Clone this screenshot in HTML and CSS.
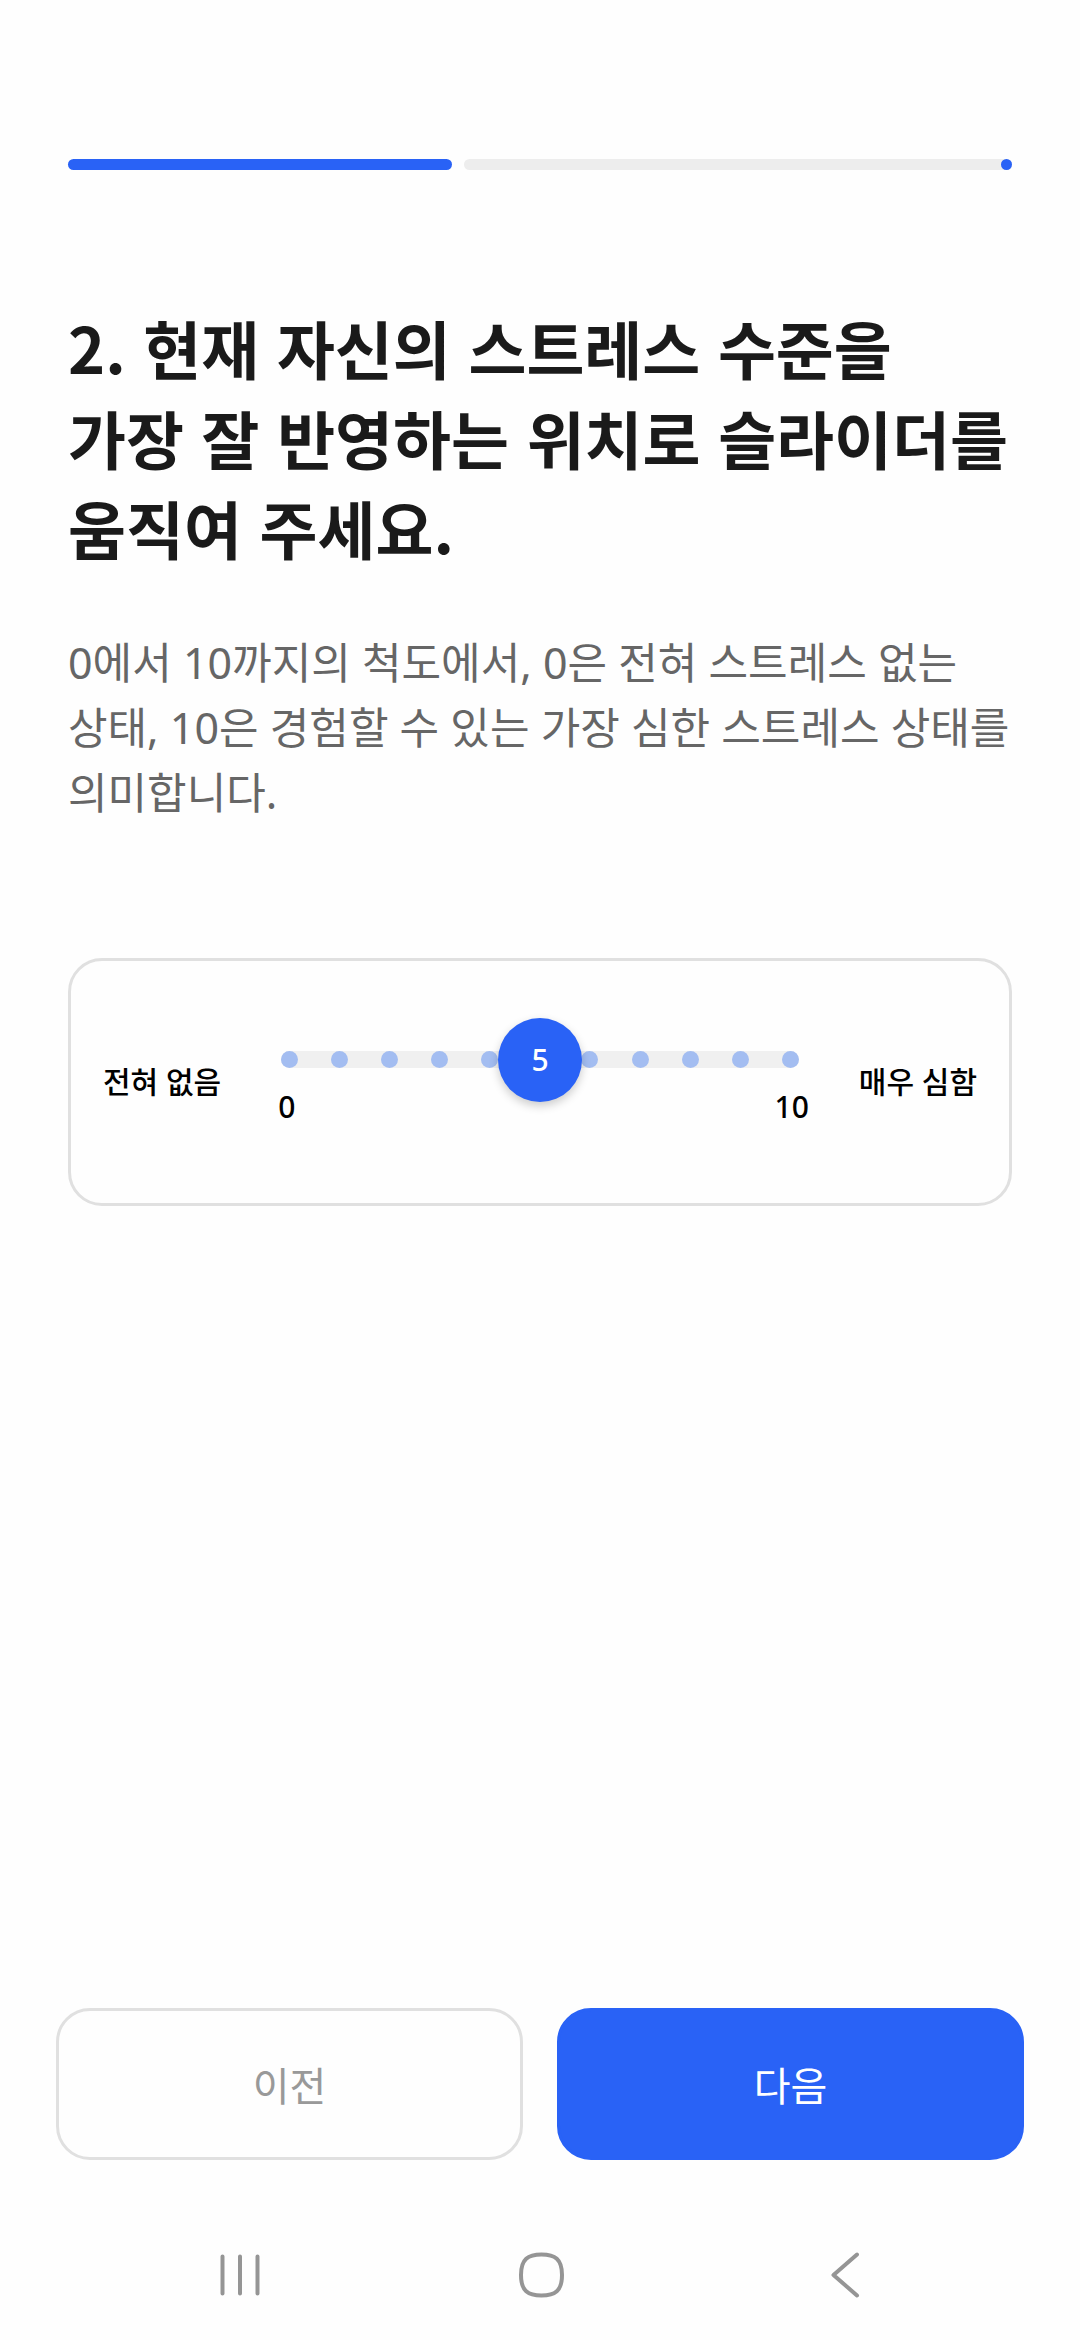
FILE: index.html
```html
<!DOCTYPE html>
<html lang="ko">
<head>
  <meta charset="UTF-8">
  <meta name="viewport" content="width=device-width, initial-scale=1.0">
  <title>스트레스 수준</title>
  <link rel="stylesheet" href="styles.css">
</head>
<body>
  <main class="survey">
    <!-- Progress -->
    <div class="progress" role="progressbar" aria-valuemin="0" aria-valuemax="100" aria-valuenow="41">
      <div class="progress-done"></div>
      <div class="progress-rest"></div>
    </div>

    <h1 id="question">2. 현재 자신의 스트레스 수준을<br>가장 잘 반영하는 위치로 슬라이더를<br>움직여 주세요.</h1>
    <p class="description">0에서 10까지의 척도에서, 0은 전혀 스트레스 없는<br>상태, 10은 경험할 수 있는 가장 심한 스트레스 상태를<br>의미합니다.</p>

    <!-- Stress slider -->
    <div class="card">
      <span class="card-label">전혀 없음</span>
      <div class="scale">
        <div class="slider">
          <div class="ticks">
            <i></i><i></i><i></i><i></i><i></i><i></i><i></i><i></i><i></i><i></i><i></i>
          </div>
          <input type="range" id="stress" min="0" max="10" value="5" aria-labelledby="question">
          <div class="value-rail"><output id="stressValue" for="stress">5</output></div>
        </div>
        <div class="scale-ends">
          <span>0</span>
          <span>10</span>
        </div>
      </div>
      <span class="card-label">매우 심함</span>
    </div>
  </main>

  <div class="actions">
    <button class="btn btn-prev" type="button">이전</button>
    <button class="btn btn-next" type="button">다음</button>
  </div>

  <!-- System navigation -->
  <nav class="system-nav">
    <button type="button" aria-label="최근 앱">
      <svg width="48" height="48" viewBox="0 0 48 48"><path d="M6.500 5.500v37M24 5.500v37M41.500 5.500v37"/></svg>
    </button>
    <button type="button" aria-label="홈">
      <svg width="48" height="48" viewBox="0 0 48 48"><path d="M25.500 3.500C39 3.500 46 8 46 24S39 44.500 25.500 44.500S5 40 5 24S12 3.500 25.500 3.500Z"/></svg>
    </button>
    <button type="button" aria-label="뒤로">
      <svg width="48" height="48" viewBox="0 0 48 48"><path d="M41 3.500L17.500 24L41 44.500"/></svg>
    </button>
  </nav>

  <script>
    const stress = document.getElementById("stress");
    const stressValue = document.getElementById("stressValue");

    stress.addEventListener("input", () => {
      stressValue.textContent = stress.value;
      stressValue.style.left = `${stress.value * 10}%`;
    });
  </script>
</body>
</html>
```
FILE: styles.css
```css
* {
  box-sizing: border-box;
}

body {
  font-family: "Noto Sans", "Noto Sans CJK KR", sans-serif;
  background: #fefefe;
  color: #000;
  margin: 0;
  display: flex;
  flex-direction: column;
  min-height: 100vh;
}

.survey {
  flex: 1;
  padding: 159px 68px 0;
}

.progress {
  display: flex;
  gap: 12px;
  height: 11px;
}

.progress-done,
.progress-rest {
  border-radius: 6px;
}

.progress-done {
  flex: 7;
  background: #2962f6;
}

.progress-rest {
  flex: 10;
  display: flex;
  justify-content: flex-end;
  background: #ededed;
}

.progress-rest::after {
  content: "";
  width: 11px;
  border-radius: 50%;
  background: #2962f6;
}

h1 {
  margin: 132px 0 0;
  font-family: "Noto Sans CJK KR", sans-serif;
  font-size: 63px;
  font-weight: 700;
  line-height: 90px;
  color: #1a1a1a;
  white-space: nowrap;
}

.description {
  margin: 58px 0 0;
  font-size: 43px;
  line-height: 65px;
  color: #666;
  white-space: nowrap;
}

.card {
  display: flex;
  align-items: center;
  margin-top: 133px;
  height: 248px;
  padding: 0 32px;
  border: 3px solid #e0e0e0;
  border-radius: 34px;
}

.card-label {
  font-size: 30px;
  font-weight: 500;
  line-height: 40px;
  white-space: nowrap;
}

.scale {
  flex: 1;
  margin: 0 50px;
}

.slider {
  position: relative;
  height: 84px;
}

.ticks {
  position: absolute;
  top: 33px;
  left: 10px;
  right: 10px;
  display: flex;
  justify-content: space-between;
  height: 17px;
  border-radius: 9px;
  background: #f0f0f0;
}

.ticks i {
  width: 17px;
  border-radius: 50%;
  background: #a3bdf1;
}

.slider input {
  position: absolute;
  top: 0;
  left: -23px;
  width: calc(100% + 46px);
  height: 84px;
  margin: 0;
  background: transparent;
  appearance: none;
  cursor: pointer;
}

.slider input::-webkit-slider-thumb {
  appearance: none;
  width: 84px;
  height: 84px;
  border-radius: 50%;
  background: #2962f6;
  box-shadow: 0 4px 10px rgba(0, 0, 0, 0.2);
}

/* number on top of the thumb */
.value-rail {
  position: absolute;
  top: 0;
  left: 19px;
  right: 19px;
  pointer-events: none;
}

.value-rail output {
  position: absolute;
  left: 50%;
  width: 84px;
  margin-left: -42px;
  text-align: center;
  font-size: 30px;
  font-weight: 500;
  line-height: 84px;
  color: #fff;
}

.scale-ends {
  display: flex;
  justify-content: space-between;
  margin-top: -15px;
  padding: 0 0 19px 7px;
  font-size: 30px;
  font-weight: 500;
  line-height: 40px;
}

.actions {
  display: flex;
  gap: 34px;
  padding: 0 56px;
}

.btn {
  flex: 1;
  height: 152px;
  border: 3px solid #e0e0e0;
  border-radius: 34px;
  font-family: inherit;
  font-size: 40px;
  cursor: pointer;
}

.btn-prev {
  background: transparent;
  color: #999;
}

.btn-next {
  background: #2962f6;
  border-color: #2962f6;
  color: #fff;
}

.system-nav {
  display: flex;
  height: 130px;
  margin-top: 50px;
  padding: 0 90px;
}

.system-nav button {
  flex: 1;
  display: flex;
  align-items: center;
  justify-content: center;
  padding: 0;
  border: none;
  background: none;
}

.system-nav svg {
  fill: none;
  stroke: #959595;
  stroke-width: 4;
  stroke-linecap: round;
  stroke-linejoin: round;
}
```
